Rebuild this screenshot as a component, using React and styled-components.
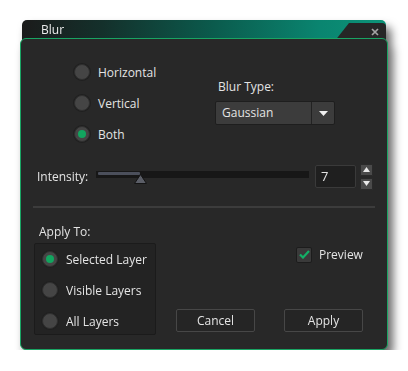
import React from 'react';
import styled, { createGlobalStyle } from 'styled-components';

const Global = createGlobalStyle`
    html, body {
        margin: 0;
        background: #ffffff;
    }
    body {
        font-family: 'Open Sans', 'Noto Sans', sans-serif;
        font-size: 12px;
        color: #e4e4e4;
    }
`

const Window = styled.div `
    width: 368px;
    margin: 20px 0 0 20px;
    display: flex;
    flex-direction: column;
    filter: drop-shadow(5px 7px 5px rgba(0,0,0,0.6));
`

const TitleBar = styled.div `
    display: flex;
    align-items: stretch;
    height: 22px;
    margin: 0 2px -4px 2px;
    border-radius: 5px 5px 0 0;
    background: linear-gradient(to right, #1b1b1b 0%, #14302b 22%, #0b5a4c 52%, #0a8570 82%, #0c9478 100%);
`

const Title = styled.div `
    flex: 1;
    padding: 3px 0 0 19px;
    font-size: 12px;
    line-height: 14px;
    color: #ececec;
`

const CloseTab = styled.div `
    width: 52px;
    margin-top: 3px;
    background: #262626;
    clip-path: polygon(15px 0, 100% 0, 100% 100%, 0 100%);
    border-top-right-radius: 4px;
    display: flex;
    justify-content: flex-end;
    padding: 5px 7px 0 0;
    box-sizing: border-box;
`

const Body = styled.div `
    position: relative;
    height: 310px;
    background: #282828;
    border: 1px solid #19a463;
    border-radius: 6px;
    display: flex;
    flex-direction: column;
`

const TopSection = styled.div `
    display: flex;
    padding: 25px 0 0 53px;
`

const RadioColumn = styled.div `
    width: 141px;
    display: flex;
    flex-direction: column;
    gap: 15px;
`

const RadioRow = styled.div `
    display: flex;
    align-items: center;
    gap: 8px;
    height: 16px;
    white-space: nowrap;
`

const RadioDot = styled.div `
    width: 14px;
    height: 14px;
    border-radius: 50%;
    background: #454545;
    border: 1px solid #2e2e2e;
    box-shadow: 0 0 0 1px #202020;
    display: flex;
    align-items: center;
    justify-content: center;
    flex-shrink: 0;

    &::after {
        content: '';
        display: ${props=>props.checked ? 'block' : 'none'};
        width: 8px;
        height: 8px;
        border-radius: 50%;
        background: #12a55f;
    }
`

const TypeColumn = styled.div `
    padding-top: 15px;
    display: flex;
    flex-direction: column;
    gap: 6px;
`

const Label = styled.div `
    line-height: 16px;
    padding-left: ${props=>props.indent || 0}px;
`

const Select = styled.div `
    display: flex;
    width: 118px;
    height: 22px;
    background: #3c3c3c;
    border: 1px solid #1e1e1e;
    border-radius: 2px;
`

const SelectValue = styled.div `
    flex: 1;
    padding-left: 6px;
    line-height: 22px;
    border-right: 1px solid #222;
`

const SelectArrow = styled.div `
    width: 22px;
    display: flex;
    align-items: center;
    justify-content: center;
`

const IntensityRow = styled.div `
    display: flex;
    align-items: center;
    padding: 0 0 0 16px;
    margin-top: 23px;
    height: 23px;
`

const IntensityLabel = styled.div `
    width: 59px;
`

const Track = styled.div `
    position: relative;
    width: 213px;
    height: 7px;
    margin-top: -4px;
    background: #171717;
`

const TrackFill = styled.div `
    position: absolute;
    left: 2px;
    top: 1px;
    height: 3px;
    background: #4b4f5b;
    border-radius: 1px;
`

const Thumb = styled.svg `
    position: absolute;
    top: 3px;
`

const NumberBox = styled.div `
    width: 34px;
    height: 21px;
    margin-left: 6px;
    padding-left: 5px;
    background: #1f1f1f;
    border: 1px solid #3a3a3a;
    border-radius: 2px;
    line-height: 21px;
    font-size: 13px;
`

const Spinner = styled.div `
    display: flex;
    flex-direction: column;
    gap: 2px;
    margin-left: 4px;
`

const SpinButton = styled.div `
    width: 11px;
    height: 10px;
    background: #4a4a4a;
    border: 1px solid #2a2a2a;
    border-radius: 1px;
    display: flex;
    align-items: center;
    justify-content: center;
`

const Separator = styled.div `
    height: 2px;
    margin: 18px 12px 0 12px;
    background: #3c3c3c;
`

const BottomSection = styled.div `
    display: flex;
    margin-top: 16px;
    padding: 0 0 13px 13px;
    flex: 1;
`

const ApplyColumn = styled.div `
    display: flex;
    flex-direction: column;
    gap: 3px;
`

const GroupBox = styled.div `
    width: 122px;
    height: 92px;
    box-sizing: border-box;
    background: #232323;
    border: 1px solid #1b1b1b;
    border-radius: 2px;
    display: flex;
    flex-direction: column;
    gap: 15px;
    padding: 7px 0 0 7px;
`

const ActionColumn = styled.div `
    display: flex;
    flex-direction: column;
    justify-content: space-between;
    margin-left: 20px;
    width: 187px;
    padding: 22px 0 4px 0;
`

const CheckRow = styled.div `
    display: flex;
    align-items: center;
    gap: 7px;
    padding-left: 120px;
`

const CheckBox = styled.div `
    width: 14px;
    height: 14px;
    background: #3a3a3a;
    border: 1px solid #1c1c1c;
    border-radius: 2px;
    display: flex;
    align-items: center;
    justify-content: center;
`

const ButtonRow = styled.div `
    display: flex;
    justify-content: space-between;
`

const Button = styled.div `
    width: 77px;
    height: 21px;
    line-height: 21px;
    text-align: center;
    background: #252525;
    border: 1px solid #474747;
    border-radius: 2px;
    font-size: 12px;
`

const Radio = ({ label, checked }) => (
    <RadioRow>
        <RadioDot checked={checked} />
        <span>{label}</span>
    </RadioRow>
)

export default function App() {
    const value = 7;
    const thumbX = 44;
    return (
        <>
            <Global />
            <Window>
                <TitleBar>
                    <Title>Blur</Title>
                    <CloseTab>
                        <svg width="8" height="8" viewBox="0 0 8 8">
                            <path d="M1 1 L7 7 M7 1 L1 7" stroke="#a4a4a4" strokeWidth="1.7" />
                        </svg>
                    </CloseTab>
                </TitleBar>
                <Body>
                    <TopSection>
                        <RadioColumn>
                            <Radio label="Horizontal" />
                            <Radio label="Vertical" />
                            <Radio label="Both" checked />
                        </RadioColumn>
                        <TypeColumn>
                            <Label indent={3}>Blur Type:</Label>
                            <Select>
                                <SelectValue>Gaussian</SelectValue>
                                <SelectArrow>
                                    <svg width="9" height="5" viewBox="0 0 9 5">
                                        <path d="M0 0 H9 L4.5 5 Z" fill="#f0f0f0" />
                                    </svg>
                                </SelectArrow>
                            </Select>
                        </TypeColumn>
                    </TopSection>

                    <IntensityRow>
                        <IntensityLabel>Intensity:</IntensityLabel>
                        <Track>
                            <TrackFill style={{ width: thumbX - 2 }} />
                            <Thumb width="13" height="10" viewBox="0 0 13 10" style={{ left: thumbX - 6 }}>
                                <path d="M6.5 0.5 L12.5 9.5 H0.5 Z" fill="#5b5e67" stroke="#141414" strokeWidth="1" />
                            </Thumb>
                        </Track>
                        <NumberBox>{value}</NumberBox>
                        <Spinner>
                            <SpinButton>
                                <svg width="7" height="5" viewBox="0 0 7 5">
                                    <path d="M0 5 H7 L3.5 0 Z" fill="#e8e8e8" />
                                </svg>
                            </SpinButton>
                            <SpinButton>
                                <svg width="7" height="5" viewBox="0 0 7 5">
                                    <path d="M0 0 H7 L3.5 5 Z" fill="#e8e8e8" />
                                </svg>
                            </SpinButton>
                        </Spinner>
                    </IntensityRow>

                    <Separator />

                    <BottomSection>
                        <ApplyColumn>
                            <Label indent={5}>Apply To:</Label>
                            <GroupBox>
                                <Radio label="Selected Layer" checked />
                                <Radio label="Visible Layers" />
                                <Radio label="All Layers" />
                            </GroupBox>
                        </ApplyColumn>
                        <ActionColumn>
                            <CheckRow>
                                <CheckBox>
                                    <svg width="11" height="9" viewBox="0 0 11 9">
                                        <path d="M1 4.5 L4 7.5 L10 1" fill="none" stroke="#14b067" strokeWidth="2.2" />
                                    </svg>
                                </CheckBox>
                                <span>Preview</span>
                            </CheckRow>
                            <ButtonRow>
                                <Button>Cancel</Button>
                                <Button>Apply</Button>
                            </ButtonRow>
                        </ActionColumn>
                    </BottomSection>
                </Body>
            </Window>
        </>
    );
}
